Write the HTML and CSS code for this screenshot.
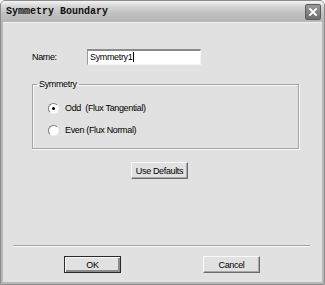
FILE: index.html
```html
<!DOCTYPE html>
<html lang="en">
<head>
    <meta charset="UTF-8">
    <title>Symmetry Boundary</title>
    <link rel="stylesheet" href="styles.css">
</head>
<body>
    <div class="window">
        <div class="titlebar">
            <span class="title">Symmetry Boundary</span>
            <span class="close">
                <svg width="14" height="14" viewBox="0 0 14 14">
                    <path d="M4 4 L10 10 M10 4 L4 10" stroke="#fff" stroke-width="1.8" stroke-linecap="square"/>
                </svg>
            </span>
        </div>

        <div class="client">
            <div class="name-row">
                <label>Name:</label>
                <div class="textbox">Symmetry1<span class="caret"></span></div>
            </div>

            <fieldset class="group">
                <legend>Symmetry</legend>
                <div class="group-body">
                    <div class="radio-row"><span class="radio checked"></span>Odd&nbsp; (Flux Tangential)</div>
                    <div class="radio-row"><span class="radio"></span>Even (Flux Normal)</div>
                </div>
            </fieldset>

            <button class="btn defaults">Use Defaults</button>

            <div class="separator"></div>

            <div class="actions">
                <button class="btn default">OK</button>
                <button class="btn">Cancel</button>
            </div>
        </div>
    </div>
</body>
</html>
```

FILE: styles.css
```css
body {
    margin: 0;
    font-family: 'Liberation Sans', Arial, sans-serif;
    font-size: 9px;
    letter-spacing: -0.35px;
    color: #000;
}

.window {
    width: 325px;
    height: 285px;
    display: flex;
    flex-direction: column;
    box-sizing: border-box;
    background: #b8b8b8;
    border: 1px solid #8c8c8c;
    border-radius: 5px 5px 0 0;
    overflow: hidden;
}

.titlebar {
    height: 21px;
    display: flex;
    align-items: center;
    justify-content: space-between;
    padding: 0 3px 0 5px;
    background: linear-gradient(#f4f4f4 0%, #d6d6d6 25%, #c0c0c0 60%, #b6b6b6 100%);
}

.title {
    font-family: 'Liberation Mono', monospace;
    font-weight: bold;
    font-size: 10px;
    letter-spacing: 0;
    color: #111;
}

.close {
    width: 14px;
    height: 14px;
    display: flex;
    border: 1px solid #5a5a5a;
    border-radius: 2px;
    background: linear-gradient(#9a9a9a, #6e6e6e);
}

.client {
    flex: 1;
    margin: 0 2px 2px;
    background: #e1e1e1;
    border-top: 1px solid #f0f0f0;
}

.name-row {
    display: flex;
    align-items: center;
    margin: 26px 0 0 29px;
}

.name-row label {
    width: 55px;
}

.textbox {
    width: 110px;
    height: 13px;
    line-height: 13px;
    padding-left: 2px;
    background: #fff;
    border-top: 2px solid #8a8a8a;
    border-left: 1px solid #9a9a9a;
    border-right: 1px solid #f4f4f4;
    border-bottom: 1px solid #f4f4f4;
}

.caret {
    display: inline-block;
    width: 1px;
    height: 10px;
    margin-left: 1px;
    vertical-align: -2px;
    background: #000;
}

.group {
    width: 265px;
    margin: 14px 0 0 29px;
    padding: 0;
    border: 1px solid #a4a4a4;
    box-shadow: inset 1px 1px 0 #f8f8f8, 1px 1px 0 #f8f8f8;
}

.group legend {
    margin-left: 4px;
    padding: 0 2px;
    line-height: 11px;
}

.group-body {
    padding: 7px 0 7px 15px;
}

.radio-row {
    height: 22px;
    display: flex;
    align-items: center;
    gap: 6px;
}

.radio {
    width: 9px;
    height: 9px;
    display: flex;
    align-items: center;
    justify-content: center;
    border: 1px solid;
    border-color: #7c7c7c #f4f4f4 #f4f4f4 #7c7c7c;
    border-radius: 50%;
    background: #fff;
}

.radio.checked::after {
    content: "";
    width: 3px;
    height: 3px;
    border-radius: 50%;
    background: #000;
}

.btn {
    height: 17px;
    padding: 0;
    font-family: inherit;
    font-size: 9px;
    letter-spacing: -0.35px;
    color: #000;
    background: #e1e1e1;
    border: 1px solid;
    border-color: #fafafa #6a6a6a #6a6a6a #fafafa;
    box-shadow: inset -1px -1px 0 #a8a8a8;
}

.defaults {
    display: block;
    width: 57px;
    margin: 13px 0 0 128px;
}

.separator {
    width: 297px;
    margin: 66px 0 0 10px;
    border-top: 1px solid #a4a4a4;
    border-bottom: 1px solid #f8f8f8;
}

.actions {
    display: flex;
    gap: 82px;
    margin: 9px 0 0 61px;
}

.actions .btn {
    width: 57px;
}

.btn.default {
    border-color: #2a2a2a;
    box-shadow: inset 1px 1px 0 #fafafa, inset -2px -2px 0 #8a8a8a;
}
```
